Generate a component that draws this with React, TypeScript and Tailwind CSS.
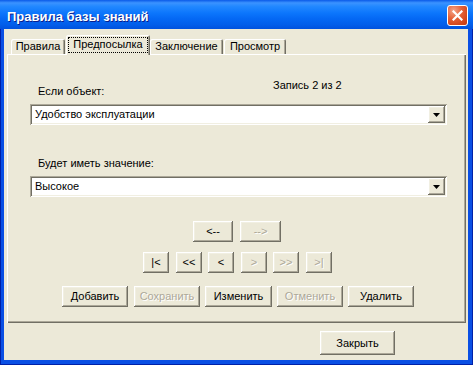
import type { ReactNode } from 'react'

const raised =
  'shadow-[inset_-1px_-1px_#716F64,inset_1px_1px_#FFFFFF,inset_-2px_-2px_#ACA899,inset_2px_2px_#F1EFE2]'

function Btn({
  children,
  disabled,
  className = '',
}: {
  children: ReactNode
  disabled?: boolean
  className?: string
}) {
  return (
    <div
      className={`flex h-[21px] items-center justify-center bg-[#ECE9D8] text-[11px] leading-[13px] ${raised} ${
        disabled ? 'text-[#ACA899] [text-shadow:1px_1px_0_#FFFFFF]' : 'text-black'
      } ${className}`}
    >
      {children}
    </div>
  )
}

function Combo({ value }: { value: string }) {
  return (
    <div className="flex h-[21px] w-[417px] bg-white p-[2px] shadow-[inset_1px_1px_#ACA899,inset_-1px_-1px_#FFFFFF,inset_2px_2px_#716F64,inset_-2px_-2px_#F1EFE2]">
      <div className="flex flex-1 items-center pl-[3px] text-[11px] leading-[13px] text-black">
        {value}
      </div>
      <div className={`flex h-[17px] w-[17px] items-center justify-center bg-[#ECE9D8] ${raised}`}>
        <svg width="7" height="4" viewBox="0 0 7 4">
          <path d="M0 0h7L3.5 4z" fill="#000" />
        </svg>
      </div>
    </div>
  )
}

function Tab({ label, active, className = '' }: { label: string; active?: boolean; className?: string }) {
  if (active) {
    return (
      <div
        className={`relative z-10 mb-[-1px] flex h-[20px] justify-center rounded-t-[2px] bg-[#ECE9D8] pt-[2px] shadow-[inset_1px_1px_#FFFFFF,inset_-1px_0_#716F64,inset_-2px_0_#ACA899] ${className}`}
      >
        <span className="h-[16px] w-[80px] border border-dotted border-black text-center text-[11px] leading-[13px] text-black">
          {label}
        </span>
      </div>
    )
  }
  return (
    <div
      className={`flex h-[15px] justify-center rounded-t-[2px] bg-[#ECE9D8] pt-[1px] text-[11px] leading-[13px] text-black shadow-[inset_1px_1px_#FFFFFF,inset_-1px_0_#716F64,inset_-2px_0_#ACA899] ${className}`}
    >
      {label}
    </div>
  )
}

export default function App() {
  return (
    <div className="flex h-[365px] w-[473px] flex-col bg-[#0A4FE4] font-['Liberation_Sans',Arial,sans-serif] shadow-[inset_1px_0_#0021A8,inset_-1px_-1px_#0021A8]">
      {/* Title bar */}
      <div className="flex h-[29px] items-start bg-[linear-gradient(to_bottom,#0A5AE8_0%,#3B93FF_10%,#2288FF_22%,#0C76FC_45%,#0468F4_65%,#025EEA_85%,#0052DE_100%)] pl-[7px] pr-[5px]">
        <div className="pt-[9px] text-[13px] font-bold leading-[16px] text-white [text-shadow:1px_1px_0_#0A1E8C]">
          Правила базы знаний
        </div>
        <div className="ml-auto mt-[5px] flex h-[21px] w-[21px] items-center justify-center rounded-[3px] border border-white bg-[radial-gradient(circle_at_30%_25%,#F4A58A_0%,#E5633A_40%,#D3461C_75%,#C23A12_100%)]">
          <svg width="11" height="11" viewBox="0 0 11 11">
            <path d="M1.5 1.5l8 8M9.5 1.5l-8 8" stroke="#FFFFFF" strokeWidth="2.2" strokeLinecap="square" />
          </svg>
        </div>
      </div>

      {/* Client area */}
      <div className="mb-[5px] ml-[4px] mr-[5px] flex flex-1 flex-col bg-[#ECE9D8] pt-[6px]">
        {/* Tabs */}
        <div className="ml-[7px] flex items-end">
          <Tab label="Правила" className="w-[54px]" />
          <Tab label="Предпосылка" active className="ml-[1px] w-[84px]" />
          <Tab label="Заключение" className="w-[73px]" />
          <Tab label="Просмотр" className="ml-[1px] w-[62px]" />
        </div>

        {/* Tab panel */}
        <div className="ml-[3px] flex h-[269px] w-[459px] flex-col shadow-[inset_1px_1px_#FFFFFF,inset_-1px_-1px_#716F64,inset_-2px_-2px_#ACA899]">
          <div className="pl-[23px] pt-[1px]">
            <div className="flex h-[49px]">
              <div className="w-[243px] pl-[8px] pt-[30px] text-[11px] leading-[13px] text-black">
                Если объект:
              </div>
              <div className="pt-[24px] text-[11px] leading-[13px] text-black">Запись 2 из 2</div>
            </div>
            <Combo value="Удобство эксплуатации" />
            <div className="mt-[32px] pl-[8px] text-[11px] leading-[13px] text-black">
              Будет иметь значение:
            </div>
            <div className="mt-[6px]">
              <Combo value="Высокое" />
            </div>
          </div>

          {/* Navigation */}
          <div className="mt-[24px] flex pl-[186px]">
            <Btn className="w-[40px]">&lt;--</Btn>
            <Btn disabled className="ml-[7px] w-[41px]">
              --&gt;
            </Btn>
          </div>
          <div className="mt-[10px] flex pl-[136px]">
            <Btn className="w-[26px]">|&lt;</Btn>
            <Btn className="ml-[7px] w-[26px]">&lt;&lt;</Btn>
            <Btn className="ml-[6px] w-[26px]">&lt;</Btn>
            <Btn disabled className="ml-[7px] w-[26px]">
              &gt;
            </Btn>
            <Btn disabled className="ml-[6px] w-[26px]">
              &gt;&gt;
            </Btn>
            <Btn disabled className="ml-[7px] w-[26px]">
              &gt;|
            </Btn>
          </div>
          <div className="mt-[13px] flex pl-[55px]">
            <Btn className="h-[20px] w-[66px]">Добавить</Btn>
            <Btn disabled className="ml-[6px] h-[20px] w-[66px]">
              Сохранить
            </Btn>
            <Btn className="ml-[5px] h-[20px] w-[67px]">Изменить</Btn>
            <Btn disabled className="ml-[5px] h-[20px] w-[66px]">
              Отменить
            </Btn>
            <Btn className="ml-[5px] h-[20px] w-[66px]">Удалить</Btn>
          </div>
        </div>

        <div className="mt-[8px] flex justify-end pr-[73px]">
          <Btn className="h-[24px] w-[75px]">Закрыть</Btn>
        </div>
      </div>
    </div>
  )
}
